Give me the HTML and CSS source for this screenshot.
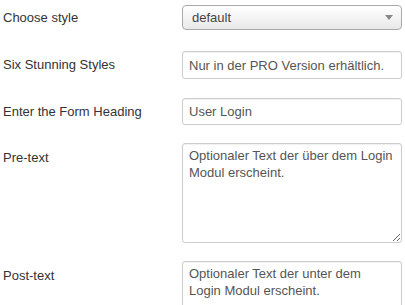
FILE: index.html
```html
<!DOCTYPE html>
<html>
<head>
    <title>Login module options</title>
    <link rel="stylesheet" href="styles.css">
</head>
<body>
    <div class="form">
        <div class="row row-select">
            <label class="lbl">Choose style</label>
            <div class="select">
                <span>default</span>
                <span class="arrow"></span>
            </div>
        </div>
        <div class="row row-six">
            <label class="lbl">Six Stunning Styles</label>
            <input class="field" type="text" value="Nur in der PRO Version erhältlich.">
        </div>
        <div class="row row-head">
            <label class="lbl">Enter the Form Heading</label>
            <input class="field" type="text" value="User Login">
        </div>
        <div class="row row-pre">
            <label class="lbl lbl-top">Pre-text</label>
            <textarea class="area">Optionaler Text der über dem Login Modul erscheint.</textarea>
        </div>
        <div class="row row-post">
            <label class="lbl lbl-top">Post-text</label>
            <textarea class="area">Optionaler Text der unter dem Login Modul erscheint.</textarea>
        </div>
    </div>
</body>
</html>
```

FILE: styles.css
```css
body { margin: 0; background: #fff; font-family: "Liberation Sans", Arial, sans-serif; font-size: 13px; color: #333; }

.form { padding: 5px 0 0 3px; }
.row { display: flex; align-items: center; }
.row-select { margin-bottom: 21px; }
.row-six { margin-bottom: 19px; }
.row-head { margin-bottom: 18px; }
.row-pre { margin-bottom: 18px; align-items: flex-start; }
.row-post { align-items: flex-start; }

.lbl { width: 179px; flex: none; line-height: 18px; }
.lbl-top { padding-top: 6px; }

.select { box-sizing: border-box; width: 220px; height: 25px; display: flex; align-items: center; justify-content: space-between;
    padding: 0 8px 0 9px; border: 1px solid #aaa; border-radius: 4px; color: #444;
    background: linear-gradient(#ffffff 0%, #f4f4f4 50%, #e8e8e8 100%); }
.arrow { width: 0; height: 0; border-left: 4px solid transparent; border-right: 4px solid transparent; border-top: 5px solid #888; }

.field, .area { box-sizing: border-box; width: 220px; margin: 0; border: 1px solid #ccc; border-radius: 3px;
    font-family: "Liberation Sans", Arial, sans-serif; font-size: 13px; color: #555; background: #fff;
    box-shadow: inset 0 1px 1px rgba(0,0,0,0.06); }
.field { height: 28px; padding: 4px 6px; }
.row-head .field { height: 27px; }
.area { height: 100px; padding: 3px 6px; line-height: 17px; resize: vertical; }
```
